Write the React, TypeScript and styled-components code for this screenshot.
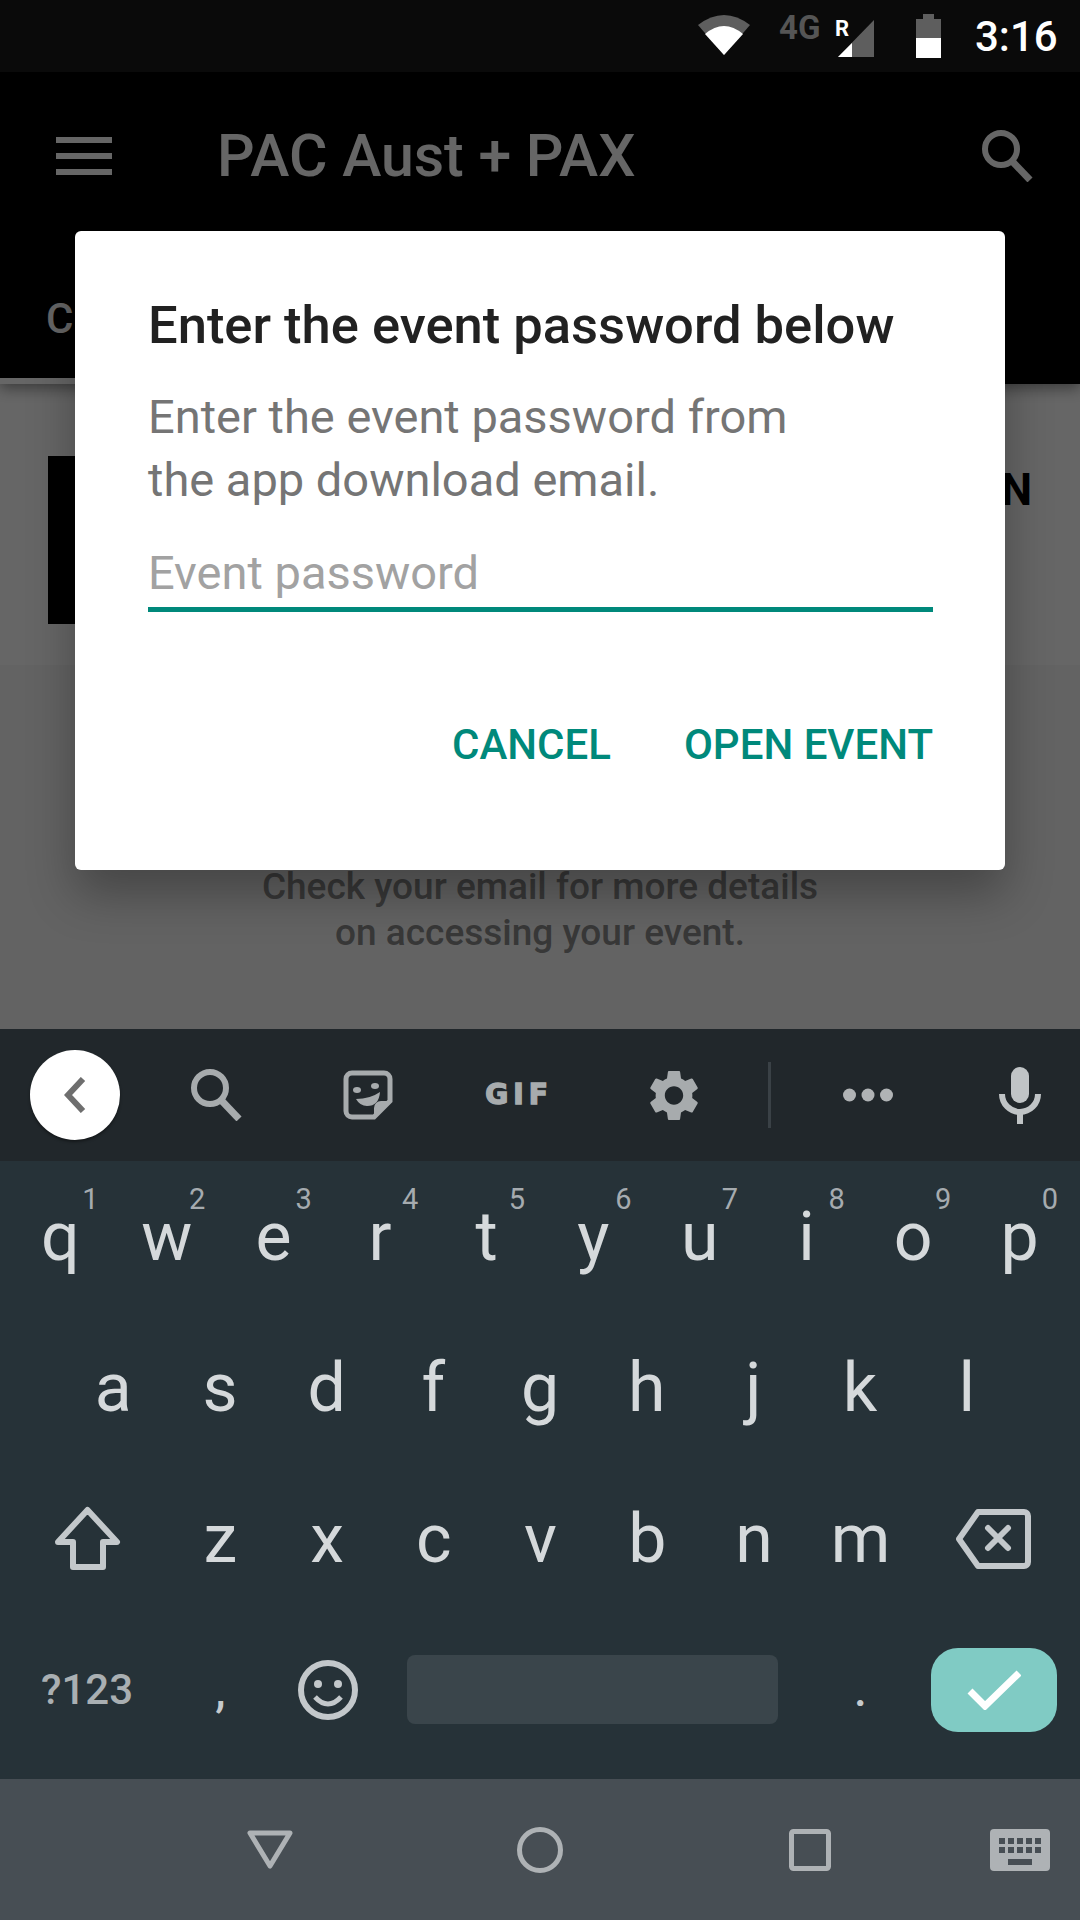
import styled, { createGlobalStyle } from "styled-components";

const GlobalStyle = createGlobalStyle`
  html, body {
    margin: 0;
    padding: 0;
    background: #000;
  }
  * {
    box-sizing: border-box;
  }
`;

const Screen = styled.div`
  width: 1080px;
  height: 1920px;
  display: flex;
  flex-direction: column;
  overflow: hidden;
  font-family: Roboto, "Liberation Sans", sans-serif;
`;

/* status bar */
const StatusBar = styled.div`
  height: 72px;
  flex: none;
  display: flex;
  align-items: flex-start;
  background: #0a0a0a;
  padding-left: 698px;
`;

const StatusIcon = styled.svg<{ $left: number; $top: number }>`
  display: block;
  flex: none;
  margin-left: ${(p) => p.$left}px;
  margin-top: ${(p) => p.$top}px;
`;

const NetworkLabel = styled.span`
  margin-left: 29px;
  width: 59px;
  margin-top: 9px;
  font-size: 33px;
  line-height: 38px;
  font-weight: 700;
  color: #555;
`;

const SignalWrap = styled.div`
  position: relative;
  width: 36px;
  height: 37px;
  margin-top: 20px;
`;

const RoamingMark = styled.span`
  position: absolute;
  left: -3px;
  top: -4px;
  font-size: 22px;
  line-height: 26px;
  font-weight: 700;
  color: #fff;
`;

const Clock = styled.span`
  margin-left: 34px;
  margin-top: 12px;
  font-size: 42px;
  line-height: 50px;
  font-weight: 500;
  color: #fff;
`;

/* app underneath the dialog */
const Main = styled.div`
  position: relative;
  height: 957px;
  flex: none;
  background: #fff;
  overflow: hidden;
`;

const AppBar = styled.header`
  position: relative;
  height: 312px;
  background: #000;
  color: #fff;
  box-shadow: 0 4px 14px rgba(0, 0, 0, 0.45);
`;

const TopRow = styled.div`
  display: flex;
  align-items: center;
  height: 168px;
  padding: 0 47px 0 56px;
`;

const MenuBars = styled.div`
  width: 56px;
  height: 38px;
  margin-bottom: 0;
  display: flex;
  flex-direction: column;
  justify-content: space-between;

  span {
    display: block;
    height: 6px;
    background: #fff;
  }
`;

const AppTitle = styled.h1`
  margin: 0 0 0 105px;
  flex: 1;
  font-size: 59px;
  line-height: 70px;
  font-weight: 500;
`;

const TabLabel = styled.div`
  padding: 54px 0 0 46px;
  font-size: 42px;
  line-height: 50px;
  font-weight: 500;
`;

const TabIndicator = styled.div`
  position: absolute;
  left: 0;
  bottom: 0;
  width: 200px;
  height: 6px;
  background: #fff;
`;

const EventRow = styled.section`
  height: 281px;
  display: flex;
  justify-content: space-between;
  padding: 72px 48px 0;
  background: #fff;
`;

const Thumb = styled.div`
  width: 168px;
  height: 168px;
  background: #000;
`;

const RowAction = styled.div`
  padding-top: 8px;
  font-size: 44px;
  line-height: 52px;
  font-weight: 700;
  color: #000;
`;

const Message = styled.p`
  margin: 0;
  padding-top: 199px;
  text-align: center;
  font-size: 37px;
  line-height: 46px;
  font-weight: 500;
  color: #8c8c8c;
  background: #f8f8f8;
  height: 400px;
`;

const Scrim = styled.div`
  position: absolute;
  inset: 0;
  background: rgba(0, 0, 0, 0.6);
`;

/* dialog */
const Dialog = styled.div`
  position: absolute;
  left: 75px;
  top: 159px;
  width: 930px;
  height: 639px;
  padding: 60px 72px 0 73px;
  background: #fff;
  border-radius: 6px;
  box-shadow: 0 24px 48px rgba(0, 0, 0, 0.3);
`;

const DialogTitle = styled.h2`
  margin: 0;
  font-size: 52.5px;
  line-height: 68px;
  font-weight: 500;
  color: #212121;
`;

const DialogBody = styled.p`
  margin: 26px 0 0;
  font-size: 47px;
  line-height: 63px;
  font-weight: 400;
  color: #757575;
`;

const PasswordField = styled.div`
  margin-top: 32px;
  height: 69px;
  border-bottom: 5px solid #00897b;
  font-size: 47px;
  line-height: 60px;
  color: #a2a2a2;
`;

const DialogActions = styled.div`
  display: flex;
  justify-content: flex-end;
  gap: 73px;
  margin-top: 108px;
`;

const DialogButton = styled.span`
  font-size: 42px;
  line-height: 50px;
  font-weight: 500;
  color: #00897b;
`;

/* keyboard */
const SuggestStrip = styled.div`
  height: 132px;
  flex: none;
  display: grid;
  grid-template-columns: 150px 131px 173px 130px 180px 11px 185px 120px;
  align-items: center;
  justify-items: center;
  background: #21272b;
`;

const BackCircle = styled.div`
  width: 90px;
  height: 90px;
  border-radius: 50%;
  display: flex;
  align-items: center;
  justify-content: center;
  background: #fff;
  box-shadow: 0 2px 3px rgba(0, 0, 0, 0.4);
`;

const GifLabel = styled.span`
  font-family: "DejaVu Sans", sans-serif;
  font-size: 28px;
  line-height: 32px;
  font-weight: 700;
  letter-spacing: 5px;
  color: #a7abad;
  -webkit-text-stroke: 1.5px #a7abad;
`;

const StripDivider = styled.div`
  width: 3px;
  height: 66px;
  background: #3a4146;
`;

const KeyArea = styled.div`
  flex: none;
  height: 618px;
  padding-bottom: 14px;
  display: flex;
  flex-direction: column;
  background: #263238;
`;

const KeyRow = styled.div<{ $inset?: number }>`
  height: 151px;
  display: flex;
  padding: 0 ${(p) => p.$inset ?? 7}px;
`;

const Key = styled.div<{ $width?: number }>`
  position: relative;
  flex: ${(p) => (p.$width ? `0 0 ${p.$width}px` : "1 1 0")};
  display: flex;
  align-items: center;
  justify-content: center;
  font-size: 68px;
  line-height: 80px;
  font-weight: 400;
  color: #d5d9db;
`;

const Hint = styled.span`
  position: absolute;
  right: 15px;
  top: 21px;
  font-size: 29px;
  line-height: 34px;
  color: #a5abaf;
`;

const ModeKey = styled(Key)`
  font-size: 42px;
  font-weight: 500;
  color: #a9afb2;
`;

const PunctuationKey = styled(Key)`
  font-size: 46px;
  font-weight: 500;
  color: #c5cacd;
`;

const SpaceBar = styled.div`
  width: 371px;
  height: 69px;
  margin: 0 29px 0 26px;
  align-self: center;
  flex: none;
  border-radius: 8px;
  background: #3a454b;
`;

const EnterKey = styled.div`
  width: 126px;
  height: 84px;
  margin: 0 17px;
  align-self: center;
  flex: none;
  display: flex;
  align-items: center;
  justify-content: center;
  border-radius: 27px;
  background: #80cbc4;
`;

/* navigation bar */
const NavBar = styled.nav`
  flex: 1;
  display: grid;
  grid-template-columns: 135px 270px 270px 270px 135px;
  align-items: center;
  justify-items: center;
  padding-bottom: 0;
  background: #474e54;
`;

const KeyboardSwitch = styled.svg`
  justify-self: end;
  margin-right: 30px;
`;

const ICON = "#a7abad";

const SearchIcon = ({ color, stroke }: { color: string; stroke: number }) => (
  <svg width="52" height="52" viewBox="0 0 52 52" fill="none" style={{ display: "block" }}>
    <circle cx="20" cy="19" r="16" stroke={color} strokeWidth={stroke} />
    <path d="M31 31 L49 50" stroke={color} strokeWidth={stroke + 1} />
  </svg>
);

const WifiIcon = () => (
  <StatusIcon $left={0} $top={15} width="52" height="40" viewBox="0 0 52 40">
    <path d="M0 10 Q26 -10 52 10 L26 40 Z" fill="#5e5e5e" />
    <path d="M7 19 Q26 3 45 19 L26 40 Z" fill="#fff" />
  </StatusIcon>
);

const SignalIcon = () => (
  <svg width="36" height="37" viewBox="0 0 36 37" style={{ display: "block" }}>
    <path d="M36 0 V37 H0 Z" fill="#5e5e5e" />
    <path d="M14 23 V37 H0 Z" fill="#fff" />
  </svg>
);

const BatteryIcon = () => (
  <StatusIcon $left={42} $top={14} width="25" height="44" viewBox="0 0 25 44">
    <path d="M7 0 H18 V5 H25 V24 H0 V5 H7 Z" fill="#5e5e5e" />
    <rect y="24" width="25" height="20" fill="#fff" />
  </StatusIcon>
);

const ChevronIcon = () => (
  <svg width="22" height="36" viewBox="0 0 22 36" fill="none">
    <path d="M19 2 L4 18 L19 34" stroke="#6e6e6e" strokeWidth="6" />
  </svg>
);

const StickerIcon = () => (
  <svg width="50" height="50" viewBox="0 0 50 50" fill="none">
    <path
      d="M9 3 H41 a6 6 0 0 1 6 6 V31 L31 47 H9 a6 6 0 0 1 -6 -6 V9 a6 6 0 0 1 6 -6 Z"
      stroke={ICON}
      strokeWidth="5"
    />
    <path d="M47 31 H38 a7 7 0 0 0 -7 7 V47 Z" fill={ICON} />
    <ellipse cx="14" cy="20" rx="4" ry="3" fill={ICON} />
    <ellipse cx="32" cy="16" rx="4" ry="3" fill={ICON} />
    <path d="M13 29 Q27 29 37 22 Q36 36 24 36 Q17 36 13 29 Z" fill={ICON} />
  </svg>
);

const GearIcon = () => (
  <svg width="50" height="51" viewBox="2.6 2 18.8 20" fill={ICON}>
    <path d="M19.14 12.94c.04-.3.06-.61.06-.94 0-.32-.02-.64-.07-.94l2.03-1.58c.18-.14.23-.41.12-.61l-1.92-3.32c-.12-.22-.37-.29-.59-.22l-2.39.96c-.5-.38-1.03-.7-1.62-.94l-.36-2.54c-.04-.24-.24-.41-.48-.41h-3.84c-.24 0-.43.17-.47.41l-.36 2.54c-.59.24-1.13.57-1.62.94l-2.39-.96c-.22-.08-.47 0-.59.22L2.74 8.87c-.12.21-.08.47.12.61l2.03 1.58c-.05.3-.09.63-.09.94s.02.64.07.94l-2.03 1.58c-.18.14-.23.41-.12.61l1.92 3.32c.12.22.37.29.59.22l2.39-.96c.5.38 1.03.7 1.62.94l.36 2.54c.05.24.24.41.48.41h3.84c.24 0 .44-.17.47-.41l.36-2.54c.59-.24 1.13-.56 1.62-.94l2.39.96c.22.08.47 0 .59-.22l1.92-3.32c.12-.22.07-.47-.12-.61l-2.01-1.58zM12 15.6c-1.98 0-3.6-1.62-3.6-3.6s1.62-3.6 3.6-3.6 3.6 1.62 3.6 3.6-1.62 3.6-3.6 3.6z" />
  </svg>
);

const DotsIcon = () => (
  <svg width="50" height="14" viewBox="0 0 50 14" fill="#b0b3b5">
    <circle cx="6.5" cy="7" r="6.5" />
    <circle cx="25" cy="7" r="6.5" />
    <circle cx="43.5" cy="7" r="6.5" />
  </svg>
);

const MicIcon = () => (
  <svg width="42" height="57" viewBox="0 0 42 57" fill="none">
    <rect x="12" width="18" height="36" rx="9" fill="#c0c4c6" />
    <path d="M3 27 a18 18 0 0 0 36 0" stroke="#c0c4c6" strokeWidth="6" />
    <rect x="18" y="44" width="6" height="13" fill="#c0c4c6" />
  </svg>
);

const ShiftIcon = () => (
  <svg width="67" height="65" viewBox="0 0 67 65" fill="none">
    <path
      d="M33.5 4 L63 36 H49 V61 H19 V36 H4 Z"
      stroke="#c3c8cb"
      strokeWidth="6"
      strokeLinejoin="round"
    />
  </svg>
);

const BackspaceIcon = () => (
  <svg width="76" height="60" viewBox="0 0 76 60" fill="none" stroke="#c3c8cb" strokeWidth="6">
    <path d="M3 30 L22 3 H68 a4 4 0 0 1 4 4 V53 a4 4 0 0 1 -4 4 H22 Z" strokeLinejoin="round" />
    <path d="M32 19 L52 39 M52 19 L32 39" strokeLinecap="round" />
  </svg>
);

const EmojiIcon = () => (
  <svg width="60" height="60" viewBox="0 0 60 60" fill="none">
    <circle cx="30" cy="30" r="27" stroke="#c3c8cb" strokeWidth="6" />
    <circle cx="20" cy="24" r="4" fill="#c3c8cb" />
    <circle cx="40" cy="24" r="4" fill="#c3c8cb" />
    <path d="M17 37 Q30 51 43 37" stroke="#c3c8cb" strokeWidth="5" />
  </svg>
);

const CheckIcon = () => (
  <svg width="54" height="40" viewBox="0 0 54 40" fill="none">
    <path d="M3 21 L18 36 L52 3" stroke="#fff" strokeWidth="7" />
  </svg>
);

const NAV = "#aeb2b5";

const NavBack = () => (
  <svg width="46" height="40" viewBox="0 0 46 40" fill="none">
    <path d="M3 3 H43 L23 36 Z" stroke={NAV} strokeWidth="5" strokeLinejoin="round" />
  </svg>
);

const NavHome = () => (
  <svg width="46" height="46" viewBox="0 0 46 46" fill="none">
    <circle cx="23" cy="23" r="20.5" stroke={NAV} strokeWidth="5" />
  </svg>
);

const NavRecents = () => (
  <svg width="42" height="42" viewBox="0 0 42 42" fill="none">
    <rect x="2.5" y="2.5" width="37" height="37" rx="2" stroke={NAV} strokeWidth="5" />
  </svg>
);

const KEYBOARD_DOTS = [9, 18, 27, 36, 45];

const ROW_ONE = ["q", "w", "e", "r", "t", "y", "u", "i", "o", "p"];
const ROW_TWO = ["a", "s", "d", "f", "g", "h", "j", "k", "l"];
const ROW_THREE = ["z", "x", "c", "v", "b", "n", "m"];
const HINTS = ["1", "2", "3", "4", "5", "6", "7", "8", "9", "0"];

const App = () => {
  return (
    <Screen>
      <GlobalStyle />

      <StatusBar>
        <WifiIcon />
        <NetworkLabel>4G</NetworkLabel>
        <SignalWrap>
          <SignalIcon />
          <RoamingMark>R</RoamingMark>
        </SignalWrap>
        <BatteryIcon />
        <Clock>3:16</Clock>
      </StatusBar>

      <Main>
        <AppBar>
          <TopRow>
            <MenuBars>
              <span />
              <span />
              <span />
            </MenuBars>
            <AppTitle>PAC Aust + PAX</AppTitle>
            <SearchIcon color="#fff" stroke={6} />
          </TopRow>
          <TabLabel>C</TabLabel>
          <TabIndicator />
        </AppBar>

        <EventRow>
          <Thumb />
          <RowAction>N</RowAction>
        </EventRow>

        <Message>
          Check your email for more details
          <br />
          on accessing your event.
        </Message>

        <Scrim />

        <Dialog>
          <DialogTitle>Enter the event password below</DialogTitle>
          <DialogBody>
            Enter the event password from
            <br />
            the app download email.
          </DialogBody>
          <PasswordField>Event password</PasswordField>
          <DialogActions>
            <DialogButton>CANCEL</DialogButton>
            <DialogButton>OPEN EVENT</DialogButton>
          </DialogActions>
        </Dialog>
      </Main>

      <SuggestStrip>
        <BackCircle>
          <ChevronIcon />
        </BackCircle>
        <SearchIcon color={ICON} stroke={6} />
        <StickerIcon />
        <GifLabel>GIF</GifLabel>
        <GearIcon />
        <StripDivider />
        <DotsIcon />
        <MicIcon />
      </SuggestStrip>

      <KeyArea>
        <KeyRow>
          {ROW_ONE.map((letter, i) => (
            <Key key={letter}>
              {letter}
              <Hint>{HINTS[i]}</Hint>
            </Key>
          ))}
        </KeyRow>
        <KeyRow $inset={60}>
          {ROW_TWO.map((letter) => (
            <Key key={letter}>{letter}</Key>
          ))}
        </KeyRow>
        <KeyRow>
          <Key $width={160}>
            <ShiftIcon />
          </Key>
          {ROW_THREE.map((letter) => (
            <Key key={letter}>{letter}</Key>
          ))}
          <Key $width={159}>
            <BackspaceIcon />
          </Key>
        </KeyRow>
        <KeyRow>
          <ModeKey $width={160}>?123</ModeKey>
          <PunctuationKey $width={107}>,</PunctuationKey>
          <Key $width={107}>
            <EmojiIcon />
          </Key>
          <SpaceBar />
          <PunctuationKey $width={107}>.</PunctuationKey>
          <EnterKey>
            <CheckIcon />
          </EnterKey>
        </KeyRow>
      </KeyArea>

      <NavBar>
        <span />
        <NavBack />
        <NavHome />
        <NavRecents />
        <KeyboardSwitch width="60" height="42" viewBox="0 0 60 42">
          <rect width="60" height="42" rx="4" fill={NAV} />
          {KEYBOARD_DOTS.map((x) => (
            <g key={x} fill="#474e54">
              <rect x={x} y="9" width="6" height="6" />
              <rect x={x} y="18" width="6" height="6" />
            </g>
          ))}
          <rect x="18" y="30" width="24" height="6" fill="#474e54" />
        </KeyboardSwitch>
      </NavBar>
    </Screen>
  );
};

export default App;
